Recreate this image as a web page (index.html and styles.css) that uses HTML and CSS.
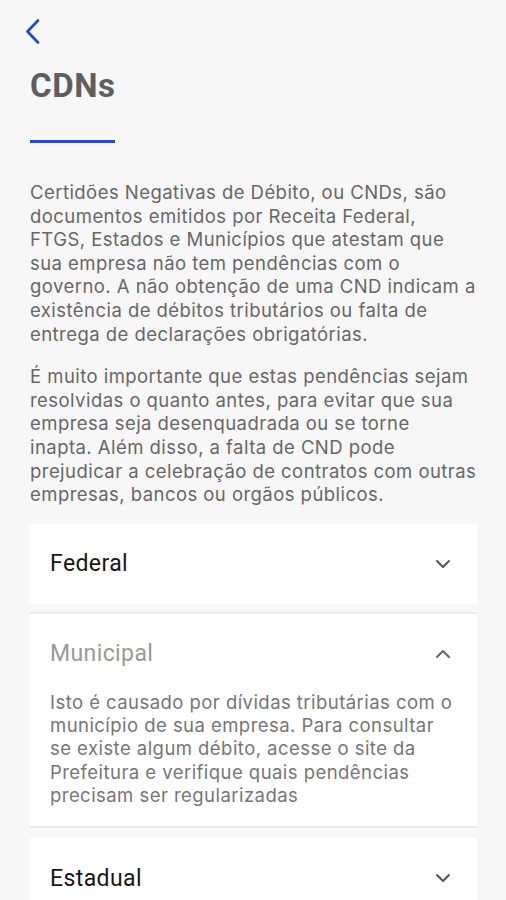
FILE: index.html
```html
<!DOCTYPE html>
<html lang="pt-BR">
<head>
<meta charset="utf-8">
<link rel="stylesheet" href="styles.css">
</head>
<body>
<div class="page">
  <header class="top">
    <button class="back" aria-label="Voltar">
      <svg width="16" height="26" viewBox="0 0 16 26"><path d="M13 1.5 L2.5 12.5 L13 23.5" fill="none" stroke="#1f44e6" stroke-width="2.6" stroke-linecap="round" stroke-linejoin="round"/></svg>
    </button>
  </header>
  <h1 class="title">CDNs</h1>
  <div class="rule"></div>
  <p class="text">Certidões Negativas de Débito, ou CNDs, são<br>documentos emitidos por Receita Federal,<br>FTGS, Estados e Municípios que atestam que<br>sua empresa não tem pendências com o<br>governo. A não obtenção de uma CND indicam a<br>existência de débitos tributários ou falta de<br>entrega de declarações obrigatórias.</p>
  <p class="text">É muito importante que estas pendências sejam<br>resolvidas o quanto antes, para evitar que sua<br>empresa seja desenquadrada ou se torne<br>inapta. Além disso, a falta de CND pode<br>prejudicar a celebração de contratos com outras<br>empresas, bancos ou orgãos públicos.</p>

  <div class="list">
    <section class="card">
      <div class="card-head">
        <span class="card-title">Federal</span>
        <svg class="chev" width="16" height="10" viewBox="0 0 16 10"><path d="M2 2 L8 8 L14 2" fill="none" stroke="#555" stroke-width="2" stroke-linecap="round" stroke-linejoin="round"/></svg>
      </div>
    </section>
    <section class="card open">
      <div class="card-head">
        <span class="card-title muted">Municipal</span>
        <svg class="chev" width="16" height="10" viewBox="0 0 16 10"><path d="M2 8 L8 2 L14 8" fill="none" stroke="#666" stroke-width="2" stroke-linecap="round" stroke-linejoin="round"/></svg>
      </div>
      <p class="card-body">Isto é causado por dívidas tributárias com o<br>município de sua empresa. Para consultar<br>se existe algum débito, acesse o site da<br>Prefeitura e verifique quais pendências<br>precisam ser regularizadas</p>
    </section>
    <section class="card">
      <div class="card-head">
        <span class="card-title">Estadual</span>
        <svg class="chev" width="16" height="10" viewBox="0 0 16 10"><path d="M2 2 L8 8 L14 2" fill="none" stroke="#555" stroke-width="2" stroke-linecap="round" stroke-linejoin="round"/></svg>
      </div>
    </section>
  </div>
</div>
</body>
</html>
```
FILE: styles.css
```css
* { box-sizing: border-box; }
html, body { margin: 0; padding: 0; }
body {
  background: #f7f7f7;
  font-family: "Inter", "Roboto", sans-serif;
  width: 506px;
  height: 900px;
  overflow: hidden;
}
.page {
  padding: 0 29px 0 30px;
}
.top {
  height: 64px;
  padding-top: 19px;
}
.back {
  background: none;
  border: 0;
  padding: 0;
  margin-left: -5px;
  display: block;
  cursor: pointer;
}
.title {
  margin: 0;
  font-family: "Roboto", sans-serif;
  font-weight: 700;
  font-size: 33px;
  line-height: 44px;
  letter-spacing: 0.6px;
  color: #5e5e5e;
}
.rule {
  width: 85px;
  height: 3px;
  background: #2747e0;
  margin-top: 32px;
  margin-bottom: 38px;
}
.text {
  margin: 0 0 19px;
  font-size: 18.5px;
  line-height: 23.6px;
  color: #676767;
  letter-spacing: 0.45px;
  white-space: nowrap;
}
.list {
  margin-top: -2px;
  display: flex;
  flex-direction: column;
  gap: 8px;
}
.card {
  background: #fff;
}
.card.open {
  border-top: 2px solid #ececec;
  border-bottom: 2px solid #e9e9e9;
  margin-bottom: 2px;
}
.card-head {
  display: flex;
  align-items: center;
  justify-content: space-between;
  height: 80px;
  padding: 0 26px 0 20px;
}
.card-title {
  font-family: "Roboto", sans-serif;
  font-size: 23px;
  letter-spacing: 0.4px;
  color: #161616;
}
.card-title.muted { color: #9a9a9a; }
.card-body {
  margin: -3px 0 0;
  padding: 0 20px 19px;
  font-size: 18.5px;
  line-height: 23.3px;
  color: #767676;
  letter-spacing: 0.45px;
  white-space: nowrap;
}
```
